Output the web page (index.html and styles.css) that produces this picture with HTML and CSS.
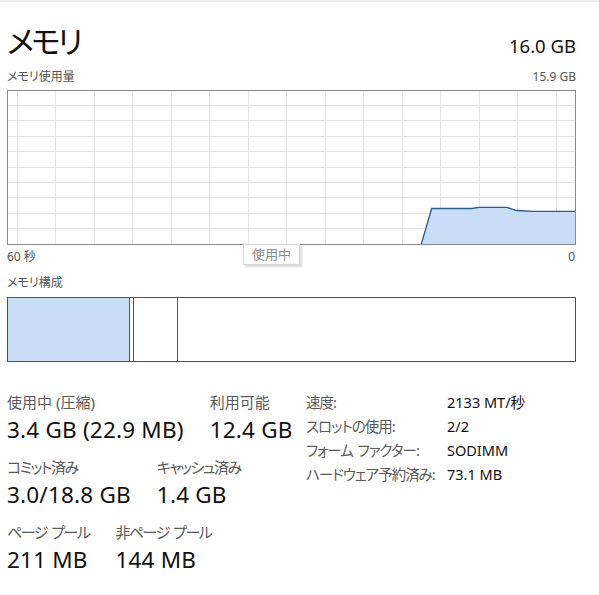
FILE: index.html
```html
<!DOCTYPE html>
<html lang="ja">
<head>
<meta charset="utf-8">
<link rel="stylesheet" href="styles.css">
</head>
<body>
<div class="topline"></div>
<main class="page">
  <header class="header">
    <h1 class="title">メモリ</h1>
    <div class="total">16.0 GB</div>
  </header>
  <div class="subheader">
    <span class="small">メモリ使用量</span>
    <span class="small">15.9 GB</span>
  </div>
  <div class="chart">
    <svg class="chart-svg" width="567" height="153" viewBox="0 0 567 153" shape-rendering="crispEdges">
      <g class="grid">
        <line x1="9.5" y1="0" x2="9.5" y2="153"/>
        <line x1="47.5" y1="0" x2="47.5" y2="153"/>
        <line x1="86.5" y1="0" x2="86.5" y2="153"/>
        <line x1="124.5" y1="0" x2="124.5" y2="153"/>
        <line x1="163.5" y1="0" x2="163.5" y2="153"/>
        <line x1="201.5" y1="0" x2="201.5" y2="153"/>
        <line x1="240.5" y1="0" x2="240.5" y2="153"/>
        <line x1="278.5" y1="0" x2="278.5" y2="153"/>
        <line x1="317.5" y1="0" x2="317.5" y2="153"/>
        <line x1="355.5" y1="0" x2="355.5" y2="153"/>
        <line x1="394.5" y1="0" x2="394.5" y2="153"/>
        <line x1="432.5" y1="0" x2="432.5" y2="153"/>
        <line x1="471.5" y1="0" x2="471.5" y2="153"/>
        <line x1="509.5" y1="0" x2="509.5" y2="153"/>
        <line x1="548.5" y1="0" x2="548.5" y2="153"/>
        <line x1="0" y1="14.5" x2="567" y2="14.5"/>
        <line x1="0" y1="29.5" x2="567" y2="29.5"/>
        <line x1="0" y1="45.5" x2="567" y2="45.5"/>
        <line x1="0" y1="60.5" x2="567" y2="60.5"/>
        <line x1="0" y1="76.5" x2="567" y2="76.5"/>
        <line x1="0" y1="91.5" x2="567" y2="91.5"/>
        <line x1="0" y1="106.5" x2="567" y2="106.5"/>
        <line x1="0" y1="122.5" x2="567" y2="122.5"/>
        <line x1="0" y1="137.5" x2="567" y2="137.5"/>
      </g>
      <polygon class="area" points="413.3,153 423.7,117.5 463.7,117.5 471,116.3 498.7,116.3 508.7,119.5 525,120.3 567,120.3 567,153" shape-rendering="geometricPrecision"/>
      <polyline class="line" points="413.3,153 423.7,117.5 463.7,117.5 471,116.3 498.7,116.3 508.7,119.5 525,120.3 567,120.3" shape-rendering="geometricPrecision"/>
    </svg>
  </div>
  <div class="axis">
    <span class="small">60 秒</span>
    <span class="small">0</span>
    <div class="tooltip">使用中</div>
  </div>
  <div class="section-label small">メモリ構成</div>
  <div class="composition">
    <div class="seg seg-used"></div>
    <div class="seg seg-modified"></div>
    <div class="seg seg-standby"></div>
    <div class="seg seg-free"></div>
  </div>
  <section class="stats">
    <div class="stats-left">
      <div class="stat-row">
        <div class="stat"><div class="label">使用中 (圧縮)</div><div class="value">3.4 GB (22.9 MB)</div></div>
        <div class="stat"><div class="label">利用可能</div><div class="value">12.4 GB</div></div>
      </div>
      <div class="stat-row">
        <div class="stat"><div class="label kana">コミット済み</div><div class="value">3.0/18.8 GB</div></div>
        <div class="stat"><div class="label kana">キャッシュ済み</div><div class="value">1.4 GB</div></div>
      </div>
      <div class="stat-row">
        <div class="stat"><div class="label kana">ページ プール</div><div class="value">211 MB</div></div>
        <div class="stat"><div class="label kana">非ページ プール</div><div class="value">144 MB</div></div>
      </div>
    </div>
    <dl class="details">
      <dt>速度:</dt><dd>2133 MT/秒</dd>
      <dt>スロットの使用:</dt><dd>2/2</dd>
      <dt>フォーム ファクター:</dt><dd>SODIMM</dd>
      <dt>ハードウェア予約済み:</dt><dd>73.1 MB</dd>
    </dl>
  </section>
</main>
</body>
</html>
```

FILE: styles.css
```css
* { box-sizing: border-box; }
html, body {
  margin: 0;
  padding: 0;
  background: #ffffff;
}
body {
  width: 599px;
  height: 595px;
  overflow: hidden;
  font-family: "Noto Sans", "Noto Sans CJK JP", sans-serif;
  font-feature-settings: "palt";
  color: #111111;
}
.topline {
  height: 2px;
  background: #f0f0f0;
}
.page {
  padding: 0 23px 0 7px;
}
.header {
  display: flex;
  justify-content: space-between;
  align-items: baseline;
  margin-top: 20px;
  height: 36px;
}
.title {
  margin: 0;
  font-weight: 400;
  font-size: 31px;
  line-height: 36px;
  letter-spacing: -3px;
  font-family: "Noto Sans CJK JP", sans-serif;
}
.total {
  font-size: 18.5px;
  line-height: 24px;
}
.small {
  font-size: 12px;
  line-height: 16px;
  color: #555555;
}
.subheader {
  display: flex;
  justify-content: space-between;
  margin-top: 11px;
  height: 16px;
}
.chart {
  margin-top: 5px;
  width: 569px;
  height: 155px;
  border: 1px solid #8a8a8a;
}
.chart-svg { display: block; }
.grid line {
  stroke: #e4e4e4;
  stroke-width: 1;
}
.area {
  fill: #c9ddf7;
}
.line {
  fill: none;
  stroke: #2a5b95;
  stroke-width: 1.3;
}
.axis {
  position: relative;
  display: flex;
  justify-content: space-between;
  margin-top: 4px;
  height: 16px;
  padding-right: 1px;
}
.tooltip {
  position: absolute;
  left: 236px;
  top: -5px;
  width: 57px;
  height: 21px;
  border: 1px solid #d6d6d6;
  background: #ffffff;
  box-shadow: 2px 2px 2px rgba(0, 0, 0, 0.15);
  font-size: 13px;
  line-height: 19px;
  text-align: center;
  color: #8c8c8c;
}
.section-label {
  margin-top: 10px;
  height: 16px;
}
.composition {
  margin-top: 6px;
  width: 569px;
  height: 65px;
  border: 1px solid #2a5b95;
  display: flex;
}
.seg { height: 100%; }
.seg-used {
  width: 122px;
  background: #c9ddf7;
  border-right: 1px solid #2a5b95;
}
.seg-modified {
  width: 4px;
  border-right: 1px solid #2a5b95;
}
.seg-standby {
  width: 44px;
  border-right: 1px solid #2a5b95;
}
.seg-free { flex: 1; }
.stats {
  margin-top: 28px;
  display: grid;
  grid-template-columns: 299px auto;
}
.stats-left {
  display: flex;
  flex-direction: column;
  gap: 11px;
}
.stat-row {
  display: flex;
  gap: 26px;
}
.label {
  font-size: 15px;
  line-height: 24px;
  color: #5a5a5a;
  white-space: nowrap;
}
.label.kana {
  letter-spacing: -1.5px;
  word-spacing: 2px;
}
.value {
  margin-top: 1px;
  font-size: 22.5px;
  line-height: 29px;
  letter-spacing: 0.2px;
  color: #111111;
}
.details {
  margin: 0;
  display: grid;
  grid-template-columns: 141px auto;
  grid-auto-rows: 24px;
  align-content: start;
  font-size: 14.5px;
  line-height: 24px;
}
.details dt {
  color: #5a5a5a;
  white-space: nowrap;
  letter-spacing: -1px;
  word-spacing: 2px;
}
.details dd {
  margin: 0;
  color: #111111;
}
```
